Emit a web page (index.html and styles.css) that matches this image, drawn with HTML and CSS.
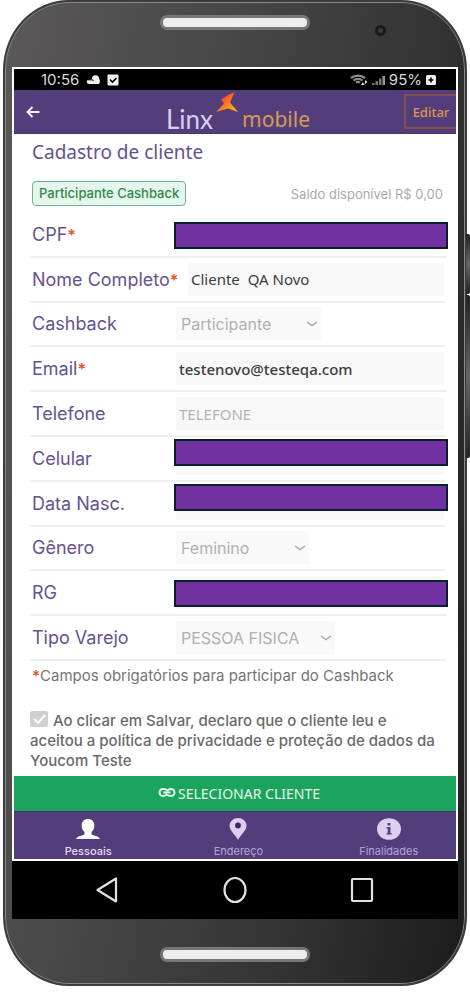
FILE: index.html
```html
<!DOCTYPE html>
<html lang="pt-BR">
<head>
<meta charset="utf-8">
<meta name="viewport" content="width=device-width, initial-scale=1">
<title>Cadastro de cliente</title>
<link rel="stylesheet" href="styles.css">
</head>
<body>
<div class="phone">
  <span class="side-key side-key--power"></span>
  <span class="side-key side-key--volume"></span>
  <div class="phone-body">
    <div class="bezel bezel--top">
      <span class="speaker"></span>
      <span class="camera"></span>
    </div>
    <div class="screen">
      <div class="app">
        <div class="status">
          <span class="clock">10:56</span>
          <svg class="ic-cloud" viewBox="0 0 14 9"><path d="M3 9a2.500 2.200 0 0 1-.5-4.300L6 4a3.500 3.500 0 0 1 7-.5c1.300 1.500 1.300 4 0 5.500z" fill="#f0f0f0"/><path d="M2 4.800h4.500l1 1.200" stroke="#000" fill="none"/></svg>
          <svg class="ic-check" viewBox="0 0 12 12"><rect x="0.500" y="0.500" width="11" height="11" rx="1" fill="#f2f2f2"/><path d="M3 5.500l2.500 2.500L9.500 4" stroke="#000" stroke-width="1.600" fill="none"/></svg>
          <span class="status-right">
            <svg class="ic-wifi" viewBox="0 0 18 13"><path d="M1 5a11 10 0 0 1 14 0M3.500 7.500a7 7 0 0 1 9 0M6 9.500a4 4 0 0 1 4 0" stroke="#8f8f8f" stroke-width="2.200" fill="none"/><path d="M11 12l2-3 1.500 3zM15 7l2.500 2-2.500 2z" fill="#ddd"/></svg>
            <svg class="ic-signal" viewBox="0 0 13 10"><path d="M0 10V8h2.500v2zM3.500 10V6H6v4zM7 10V3.500h2.500V10z" fill="#777"/><path d="M10.500 10V1H13v9z" fill="#999"/></svg>
            <span class="battery">95%</span>
            <svg class="ic-batt" viewBox="0 0 10 10"><rect width="10" height="10" rx="1.500" fill="#f2f2f2"/><path d="M5 2.500v5M2.500 5h5" stroke="#000" stroke-width="1.600"/></svg>
          </span>
        </div>
        <header class="header">
          <button class="back" type="button" aria-label="Voltar"><svg viewBox="0 0 14 12"><path d="M13.500 6H1.500M6.500 1L1.500 6l5 5" stroke="#f4eefb" stroke-width="1.900" fill="none"/></svg></button>
          <div class="logo">
            <span class="logo-linx">Linx</span>
            <svg class="logo-star" viewBox="0 0 22 20"><defs><linearGradient id="g" x1="0" y1="0" x2="1" y2="1"><stop offset=".35" stop-color="#f5562f"/><stop offset=".6" stop-color="#fb8a1c"/><stop offset="1" stop-color="#ffc20e"/></linearGradient></defs><path d="M18.500 0Q12 2.500 5 7.500L8 11.500 0 20 12 16.500 22 20 14 10.500z" fill="url(#g)"/></svg>
            <span class="logo-mobile">mobile</span>
          </div>
          <button class="edit" type="button">Editar</button>
        </header>
        <main class="content">
          <h1 class="title">Cadastro de cliente</h1>
          <div class="summary">
            <span class="badge">Participante Cashback</span>
            <span class="balance">Saldo disponível R$ 0,00</span>
          </div>
          <form class="rows">
            <div class="row"><label for="cpf">CPF<b class="req">*</b></label><div class="field"><input id="cpf" type="text"><span class="mask mask--low"></span></div></div>
            <div class="row row--wide"><label for="nome">Nome Completo<b class="req">*</b></label><div class="field"><input id="nome" type="text" value="Cliente  QA Novo"></div></div>
            <div class="row"><label for="cashback">Cashback</label><div class="field"><select id="cashback" class="pick pick--m" disabled><option>Participante</option></select></div></div>
            <div class="row"><label for="email">Email<b class="req">*</b></label><div class="field"><input id="email" class="email" type="email" value="testenovo@testeqa.com"></div></div>
            <div class="row"><label for="tel">Telefone</label><div class="field"><input id="tel" type="tel" placeholder="TELEFONE"></div></div>
            <div class="row"><label for="cel">Celular</label><div class="field"><input id="cel" type="tel"><span class="mask mask--high"></span></div></div>
            <div class="row"><label for="nasc">Data Nasc.</label><div class="field"><input id="nasc" type="text"><span class="mask mask--high"></span></div></div>
            <div class="row"><label for="genero">Gênero</label><div class="field"><select id="genero" class="pick pick--s" disabled><option>Feminino</option></select></div></div>
            <div class="row"><label for="rg">RG</label><div class="field"><input id="rg" type="text"><span class="mask mask--low"></span></div></div>
            <div class="row"><label for="tipo">Tipo Varejo</label><div class="field"><select id="tipo" class="pick pick--l" disabled><option>PESSOA FISICA</option></select></div></div>
          </form>
          <p class="hint"><b class="req">*</b>Campos obrigatórios para participar do Cashback</p>
          <div class="consent"><input id="aceite" type="checkbox" checked disabled><label for="aceite">Ao clicar em Salvar, declaro que o cliente leu e aceitou a política de privacidade e proteção de dados da Youcom Teste</label></div>
        </main>
        <button class="select-client" type="button">
          <svg viewBox="0 0 18 9"><path d="M9.500 2.500C8 1 6.500 1 5 1a3.500 3.500 0 0 0 0 7c2 0 3-.5 4-2M8.500 6.500C10 8 11.500 8 13 8a3.500 3.500 0 0 0 0-7c-2 0-3 .5-4 2M5.500 4.500h2.500l1 1M12.500 4.500H10l-1-1" stroke="#e6f7ec" stroke-width="2" fill="none"/></svg>
          <span>SELECIONAR CLIENTE</span>
        </button>
        <nav class="tabs">
          <button class="tab tab--active" type="button"><svg viewBox="0 0 24 22"><path d="M12 1c4 0 6.300 2.600 6.300 6.300 0 3-1 5.200-2.800 6.700v2.200c1.500 1.500 7.500 1.800 8.500 4.800H0c1-3 7-3.300 8.500-4.800V14c-1.800-1.500-2.800-3.700-2.800-6.700C5.700 3.600 8 1 12 1z" fill="#fff"/></svg><span>Pessoais</span></button>
          <button class="tab" type="button"><svg viewBox="0 0 24 22"><path d="M12 0a8.500 7.800 0 0 1 8.500 7.800C20.500 12.500 14.500 17 12 22 9.500 17 3.500 12.500 3.500 7.800A8.500 7.800 0 0 1 12 0z" fill="#dccff0"/><circle cx="12" cy="7.500" r="2.900" fill="#3c2a63"/></svg><span>Endereço</span></button>
          <button class="tab" type="button"><svg viewBox="0 0 24 22"><ellipse cx="12" cy="11" rx="12" ry="10.800" fill="#dccff0"/><path d="M10.500 5h3v2.500h-3zM9.500 9h4v6h1.200v1.600H9.500V15h1.200v-4.500H9.500z" fill="#5a4580"/></svg><span>Finalidades</span></button>
        </nav>
      </div>
      <div class="sysnav">
        <button type="button" aria-label="Voltar"><svg viewBox="0 0 24 28"><path d="M21 2.500v23L2.500 14z" fill="none" stroke="#e2e2e2" stroke-width="2.200" stroke-linejoin="round"/></svg></button>
        <button type="button" aria-label="Início"><svg viewBox="0 0 24 28"><ellipse cx="12" cy="14" rx="10.500" ry="12" fill="none" stroke="#e2e2e2" stroke-width="2.200"/></svg></button>
        <button type="button" aria-label="Recentes"><svg viewBox="0 0 24 28"><rect x="2" y="3" width="20" height="22" rx="1" fill="none" stroke="#e2e2e2" stroke-width="2.200"/></svg></button>
      </div>
    </div>
    <div class="bezel bezel--bottom"><span class="speaker"></span></div>
  </div>
</div>
</body>
</html>
```

FILE: styles.css
```css
* { box-sizing: border-box; }
body { margin: 0; background: #fff; font-family: Inter, "Noto Sans", sans-serif; }
button { font: inherit; margin: 0; padding: 0; border: 0; background: none; color: inherit; }
svg { display: block; }

.phone { position: relative; padding: 0 3px; }
.phone-body {
  border: 2px solid #3c3c3c;
  border-radius: 66px / 70px;
  box-shadow: inset 0 0 0 1px #8a8a8a;
  background: linear-gradient(100deg, #5b5859 0%, #484848 35%, #333 70%, #1c1c1c 100%);
  padding: 0 7px;
}
.side-key { position: absolute; right: 0; width: 4px; border-radius: 0 2px 2px 0; background: linear-gradient(#222, #666 50%, #222); }
.side-key--power { top: 234px; height: 60px; }
.side-key--volume { top: 295px; height: 163px; }

.bezel { position: relative; display: flex; justify-content: center; }
.bezel--top { height: 65px; padding-top: 13px; }
.bezel--bottom { height: 65px; padding-top: 28px; }
.speaker { width: 150px; height: 15px; border: 3px solid #777; border-radius: 7px; background: #eee; }
.camera { position: absolute; right: 72px; top: 23px; width: 11px; height: 11px; border: 3px solid #191919; border-radius: 50%; background: #3a3a3a; }

.screen { background: #000; }
.app { border: 2px solid #fff; background: #fff; overflow: hidden; }

.status { display: flex; align-items: center; height: 21px; padding: 0 20px 0 27px; background: #000; color: #d8d8d8; font: 15px/21px Inter, sans-serif; }
.clock { margin-right: 7px; }
.ic-cloud { width: 14px; height: 9px; margin-right: 7px; }
.ic-check { width: 12px; height: 12px; }
.status-right { display: flex; align-items: center; margin-left: auto; gap: 4px; }
.ic-wifi { width: 18px; height: 13px; }
.ic-signal { width: 13px; height: 10px; }
.ic-batt { width: 10px; height: 10px; }

.header { display: flex; align-items: center; justify-content: space-between; height: 44px; background: #533e7b; border-bottom: 1px solid #46356b; }
.back { width: 38px; height: 40px; padding-left: 12px; }
.back svg { width: 14px; height: 12px; }
.logo { display: flex; align-items: flex-end; padding-left: 20px; height: 40px; }
.logo-linx { font: 26px/26px Lato, sans-serif; color: #dccdf0; }
.logo-star { width: 22px; height: 20px; align-self: flex-start; margin: 0 4px 0 3px; }
.logo-mobile { font: 21px/26px "Noto Sans", sans-serif; color: #d59a55; }
.edit { width: 52px; height: 35px; border: 2px solid #84504e; border-right: 0; color: #dd9748; font: 500 13px/20px "Noto Sans", sans-serif; }

.content { padding: 0 10px 5px 16px; }
.title { margin: 0 2px; font: 19px/36px "Noto Sans", sans-serif; color: #66528f; }
.summary { display: flex; align-items: center; justify-content: space-between; margin: 11px 3px 7px 2px; }
.badge { border: 1px solid #6fb287; border-radius: 4px; background: #e5f6ee; padding: 0 6px; font-size: 13px; line-height: 23px; font-weight: 500; color: #2f8a45; }
.balance { font-size: 13px; color: #aaa; }

.rows { display: grid; grid-auto-rows: 1fr; min-height: 448px; }
.row { display: grid; grid-template-columns: 146px 1fr; align-items: center; border-bottom: 2px solid #efefef; }
.row--wide { grid-template-columns: 158px 1fr; }
.row label { padding-left: 2px; font-size: 18px; color: #66528f; white-space: nowrap; }
.req { color: #e2542b; font-weight: 600; }
.row .req { font-size: 16px; }
.field { position: relative; padding-right: 2px; }
.field input { display: block; width: 100%; height: 33px; border: 0; padding: 0 3px; background: #f8f8f8; color: #3d3d3d; font: 15px/20px "Noto Sans", sans-serif; }
.field .email { font-weight: 500; }
.field input::placeholder { color: #b4b4b4; opacity: 1; }
.pick { display: block; height: 33px; border: 0; padding: 0 5px; color: #b0b0b0; opacity: 1; font: 16px/20px Inter, sans-serif; appearance: none;
  background: #f9f9f9 url("data:image/svg+xml,%3Csvg xmlns='http://www.w3.org/2000/svg' viewBox='0 0 12 6'%3E%3Cpath d='M1 1l5 3.500L11 1' fill='none' stroke='%23a8a8a8' stroke-width='1.500'/%3E%3C/svg%3E") no-repeat right 3px center / 12px 6px; }
.pick--s { width: 133px; }
.pick--m { width: 145px; }
.pick--l { width: 159px; }
.mask { position: absolute; left: -2px; right: -2px; height: 27px; border: 2px solid #08202e; background: #7030a0; }
.mask--low { top: 4px; }
.mask--high { top: -3px; }

.hint { margin: 0 2px; font-size: 15px; line-height: 30px; color: #747474; }
.consent { margin-top: 20px; padding-right: 5px; font-size: 15px; line-height: 20px; font-weight: 500; color: #6a6a6a; }
.consent input { appearance: none; display: inline-block; width: 18px; height: 16px; margin: 0 5px 0 0; border-radius: 2px; vertical-align: -1px;
  background: #d0d0d0 url("data:image/svg+xml,%3Csvg xmlns='http://www.w3.org/2000/svg' viewBox='0 0 18 16'%3E%3Cpath d='M4 8l4 4 7-8' fill='none' stroke='%23fff' stroke-width='2'/%3E%3C/svg%3E") center / 100% 100%; }

.select-client { display: flex; align-items: center; justify-content: center; gap: 2px; width: 100%; height: 35px; padding-left: 8px; background: #1ba55c; color: #e6f7ec; font: 14px/20px "Noto Sans", sans-serif; }
.select-client svg { width: 18px; height: 9px; margin-bottom: 3px; }

.tabs { display: grid; grid-template-columns: repeat(3, 1fr); width: 102%; background: #533e7b; border-top: 1px solid #46356b; }
.tab { display: flex; flex-direction: column; align-items: center; gap: 4px; padding: 6px 2px 1px 0; color: #b5a3d6; font-size: 11px; line-height: 14px; }
.tab--active { color: #e6dcf5; font-weight: 500; }
.tab svg { width: 24px; height: 22px; }

.sysnav { display: flex; justify-content: space-between; align-items: center; height: 58px; padding: 0 84px 0 83px; }
.sysnav svg { width: 24px; height: 28px; }
```
